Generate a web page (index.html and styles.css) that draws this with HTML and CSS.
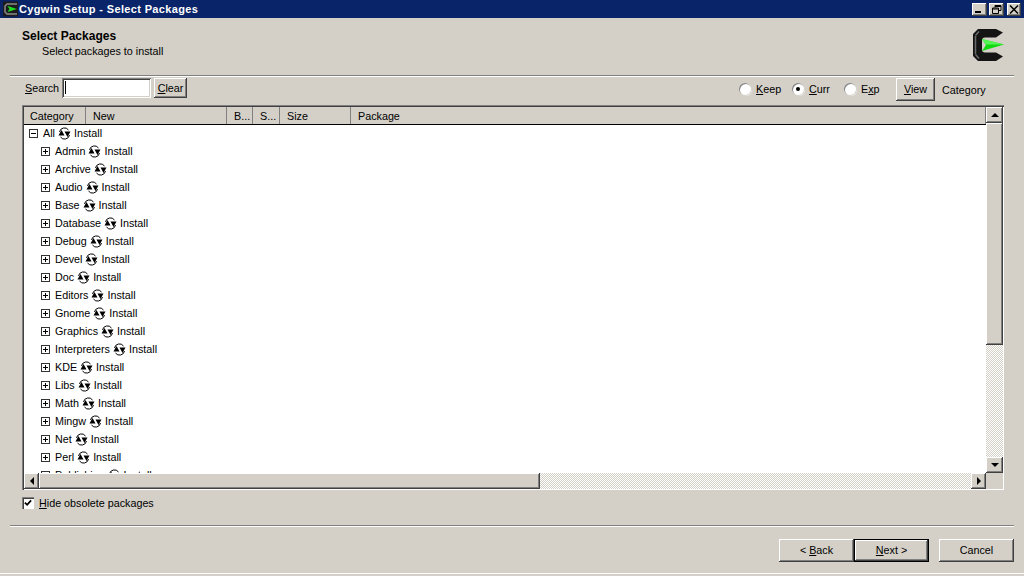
FILE: index.html
```html
<!DOCTYPE html>
<html lang="en">
<head>
<meta charset="utf-8">
<title>Cygwin Setup - Select Packages</title>
<link rel="stylesheet" href="styles.css">
</head>
<body>
<svg class="defs" width="0" height="0" aria-hidden="true">
  <symbol id="sync" viewBox="0 0 13 13">
    <path d="M1.500 5A5 5 0 0 1 10.500 3M11.500 8A5 5 0 0 1 2.500 10" fill="none" stroke="#000" stroke-width="1"/>
    <path d="M0.500 8.500h6L3.500 3zM6.500 4.500h6L9.500 10z" fill="#000"/>
  </symbol>
  <symbol id="logo" viewBox="0 0 31 32">
    <path d="M5 0H23L30 3.500 23 8.500H12Q9 8.500 9 11.500V20.500Q9 23.500 12 23.500H23L30 27.500 23 32H5L0 27V5Z" fill="#141414"/>
    <path d="M2.500 6.500 6 2.500M2.500 7V25M2.500 25.500 6 29.500" fill="none" stroke="#6a6a6a" stroke-width="1.500"/>
    <path d="M9 10 31 15.500 9 22 13 16Z" fill="#12d812"/>
    <path d="M9 10 31 15.500 13 15.500Z" fill="#55f555"/>
  </symbol>
</svg>
<div class="window">
  <header class="titlebar">
    <svg class="title-icon" viewBox="0 0 16 16"><rect x="1" y="0.500" width="15" height="15" fill="#1c1c1c"/><path d="M15 3H5L3 5v6l2 2h10" fill="none" stroke="#8a8a8a" stroke-width="1.500"/><path d="M5.500 5l9.500 3-9.500 3 2-3z" fill="#1fe01f"/></svg>
    <span class="title-text">Cygwin Setup - Select Packages</span>
    <div class="caption-buttons">
      <div class="caption-btn"><span class="min-glyph"></span></div>
      <div class="caption-btn"><svg class="glyph" viewBox="0 0 10 9"><path d="M3 .5h6v5H7M3 .500v2M3 1.500h6M.5 3h6v5.500H.5zM.5 4h6" fill="none" stroke="#000"/></svg></div>
      <div class="caption-btn close"><svg class="glyph" viewBox="0 0 10 9"><path d="M1 .5 9 8.500M9 .500 1 8.500" fill="none" stroke="#000" stroke-width="1.500"/></svg></div>
    </div>
  </header>

  <section class="page-header">
    <div class="heading">
      <div class="heading-title">Select Packages</div>
      <div class="heading-sub">Select packages to install</div>
    </div>
    <svg class="logo"><use href="#logo"/></svg>
  </section>
  <div class="rule"></div>

  <div class="toolbar">
    <label class="search-label"><u>S</u>earch</label>
    <div class="search-input"><span class="caret"></span></div>
    <button class="btn clear"><u>C</u>lear</button>
    <div class="spacer"></div>
    <span class="radio"></span><span class="radio-label keep"><u>K</u>eep</span>
    <span class="radio on"></span><span class="radio-label curr"><u>C</u>urr</span>
    <span class="radio"></span><span class="radio-label exp">E<u>x</u>p</span>
    <button class="btn view"><u>V</u>iew</button>
    <span class="view-mode">Category</span>
  </div>

  <div class="listbox">
    <div class="list-main">
      <div class="columns">
        <div class="col">Category</div>
        <div class="col">New</div>
        <div class="col">B...</div>
        <div class="col">S...</div>
        <div class="col">Size</div>
        <div class="col">Package</div>
      </div>
      <div class="tree">
        <div class="row root"><span class="exp-box minus"></span><span class="name">All</span><svg class="sync"><use href="#sync"/></svg><span>Install</span></div>
        <div class="row"><span class="exp-box"></span><span class="name">Admin</span><svg class="sync"><use href="#sync"/></svg><span>Install</span></div>
        <div class="row"><span class="exp-box"></span><span class="name">Archive</span><svg class="sync"><use href="#sync"/></svg><span>Install</span></div>
        <div class="row"><span class="exp-box"></span><span class="name">Audio</span><svg class="sync"><use href="#sync"/></svg><span>Install</span></div>
        <div class="row"><span class="exp-box"></span><span class="name">Base</span><svg class="sync"><use href="#sync"/></svg><span>Install</span></div>
        <div class="row"><span class="exp-box"></span><span class="name">Database</span><svg class="sync"><use href="#sync"/></svg><span>Install</span></div>
        <div class="row"><span class="exp-box"></span><span class="name">Debug</span><svg class="sync"><use href="#sync"/></svg><span>Install</span></div>
        <div class="row"><span class="exp-box"></span><span class="name">Devel</span><svg class="sync"><use href="#sync"/></svg><span>Install</span></div>
        <div class="row"><span class="exp-box"></span><span class="name">Doc</span><svg class="sync"><use href="#sync"/></svg><span>Install</span></div>
        <div class="row"><span class="exp-box"></span><span class="name">Editors</span><svg class="sync"><use href="#sync"/></svg><span>Install</span></div>
        <div class="row"><span class="exp-box"></span><span class="name">Gnome</span><svg class="sync"><use href="#sync"/></svg><span>Install</span></div>
        <div class="row"><span class="exp-box"></span><span class="name">Graphics</span><svg class="sync"><use href="#sync"/></svg><span>Install</span></div>
        <div class="row"><span class="exp-box"></span><span class="name">Interpreters</span><svg class="sync"><use href="#sync"/></svg><span>Install</span></div>
        <div class="row"><span class="exp-box"></span><span class="name">KDE</span><svg class="sync"><use href="#sync"/></svg><span>Install</span></div>
        <div class="row"><span class="exp-box"></span><span class="name">Libs</span><svg class="sync"><use href="#sync"/></svg><span>Install</span></div>
        <div class="row"><span class="exp-box"></span><span class="name">Math</span><svg class="sync"><use href="#sync"/></svg><span>Install</span></div>
        <div class="row"><span class="exp-box"></span><span class="name">Mingw</span><svg class="sync"><use href="#sync"/></svg><span>Install</span></div>
        <div class="row"><span class="exp-box"></span><span class="name">Net</span><svg class="sync"><use href="#sync"/></svg><span>Install</span></div>
        <div class="row"><span class="exp-box"></span><span class="name">Perl</span><svg class="sync"><use href="#sync"/></svg><span>Install</span></div>
        <div class="row"><span class="exp-box"></span><span class="name">Publishing</span><svg class="sync"><use href="#sync"/></svg><span>Install</span></div>
      </div>
      <div class="hscroll">
        <div class="sb-btn"><span class="arrow left"></span></div>
        <div class="sb-thumb hthumb"></div>
        <div class="sb-track"></div>
        <div class="sb-btn"><span class="arrow right"></span></div>
      </div>
    </div>
    <div class="vscroll">
      <div class="sb-btn"><span class="arrow up"></span></div>
      <div class="sb-thumb vthumb"></div>
      <div class="sb-track"></div>
      <div class="sb-btn"><span class="arrow down"></span></div>
    </div>
  </div>

  <div class="options">
    <span class="checkbox"><svg viewBox="0 0 9 9"><path d="M1 4l2.500 2.500L8 1.500" fill="none" stroke="#000" stroke-width="2"/></svg></span>
    <span><u>H</u>ide obsolete packages</span>
  </div>

  <div class="rule footer-rule"></div>

  <footer class="footer">
    <button class="btn wizard">&lt; <u>B</u>ack</button>
    <button class="btn wizard default"><u>N</u>ext &gt;</button>
    <button class="btn wizard cancel">Cancel</button>
  </footer>
  <div class="bottom-edge"></div>
</div>
</body>
</html>
```
FILE: styles.css
```css
* { box-sizing: border-box; }
html, body { margin: 0; height: 100%; }
body {
  width: 1024px;
  height: 576px;
  overflow: hidden;
  background: #d4d0c8;
  color: #000;
  font-family: "Liberation Sans", Arial, sans-serif;
  font-size: 10.75px;
  line-height: 14px;
}
.defs { position: absolute; }
.window { display: flex; flex-direction: column; height: 576px; }

.titlebar {
  display: flex;
  align-items: center;
  height: 18px;
  background: #0a246a;
  color: #fff;
  font-weight: bold;
  font-size: 11px;
  padding-left: 2px;
}
.title-icon { width: 16px; height: 16px; }
.title-text { margin-left: 1px; letter-spacing: 0.35px; }
.caption-buttons { display: flex; margin-left: auto; padding-right: 3px; }
.caption-btn {
  display: flex;
  align-items: center;
  justify-content: center;
  width: 15px;
  height: 13px;
  margin-left: 2px;
  background: #d4d0c8;
  box-shadow: inset -1px -1px #404040, inset 1px 1px #fff, inset -2px -2px #808080;
}
.caption-btn.close { width: 14px; margin-left: 3px; }
.glyph { width: 10px; height: 9px; }
.min-glyph { width: 6px; height: 2px; background: #000; margin: 6px 3px 0 0; }

.page-header {
  display: flex;
  justify-content: space-between;
  height: 57px;
  padding: 11px 20px 0 22px;
}
.heading-title { font-weight: bold; font-size: 12px; line-height: 14px; }
.heading-sub { margin: 1px 0 0 20px; }
.logo { width: 31px; height: 32px; }

.rule {
  flex: none;
  height: 2px;
  margin: 0 10px;
  background: linear-gradient(#808080 0 1px, #fff 1px);
}

.toolbar {
  display: flex;
  align-items: flex-start;
  height: 28px;
  padding: 1px 82px 0 25px;
}
.search-label { width: 37px; margin-top: 3px; }
.search-input {
  width: 89px;
  height: 20px;
  background: #fff;
  padding: 3px;
  box-shadow: inset 1px 1px #808080, inset -1px -1px #fff, inset 2px 2px #404040, inset -2px -2px #d4d0c8;
}
.caret { display: block; width: 1px; height: 13px; background: #000; }
.spacer { flex: 1; }
.btn {
  border: 0;
  padding: 0;
  background: #d4d0c8;
  color: #000;
  font: inherit;
  box-shadow: inset -1px -1px #404040, inset 1px 1px #fff, inset -2px -2px #808080;
}
.clear { width: 33px; height: 20px; margin-left: 3px; }
.radio {
  position: relative;
  width: 12px;
  height: 12px;
  margin-top: 5px;
  border-radius: 50%;
  background: #fff;
  box-shadow: inset 1px 1px 0 #808080, 0 0 0 1px #d4d0c8, 1px 1px 0 0 #fff;
}
.radio.on::after {
  content: "";
  position: absolute;
  left: 4px;
  top: 4px;
  width: 4px;
  height: 4px;
  border-radius: 50%;
  background: #000;
}
.radio-label { margin: 4px 0 0 5px; }
.keep { width: 36px; }
.curr { width: 35px; }
.exp { width: 35px; }
.view { width: 39px; height: 23px; padding-bottom: 2px; }
.view-mode { width: 0; margin: 5px 0 0 7px; white-space: nowrap; }

.listbox {
  display: flex;
  flex: none;
  height: 385px;
  margin: 0 20px 0 22px;
  padding: 2px 1px 1px 2px;
  box-shadow: inset 1px 1px #808080, inset 2px 2px #404040, inset -1px -1px #fff;
}
.list-main { display: flex; flex-direction: column; flex: 1; min-width: 0; }
.columns {
  display: grid;
  grid-template-columns: 62px 141px 26px 27px 71px 1fr;
  height: 18px;
  flex: none;
  border-bottom: 1px solid #000;
}
.col {
  padding: 2px 0 0 7px;
  background: #d4d0c8;
  white-space: nowrap;
  overflow: hidden;
  box-shadow: inset -1px 0 #808080;
}
.col:first-child { padding-left: 6px; }
.tree {
  flex: 1;
  min-height: 0;
  overflow: hidden;
  background: #fff;
}
.row {
  display: flex;
  align-items: center;
  height: 18px;
  padding: 0 0 2px 17px;
  white-space: nowrap;
}
.row.root { padding-left: 5px; }
.exp-box {
  position: relative;
  flex: none;
  width: 9px;
  height: 9px;
  margin-right: 5px;
  border: 1px solid #333;
}
.exp-box::before {
  content: "";
  position: absolute;
  left: 1px;
  top: 3px;
  width: 5px;
  height: 1px;
  background: #000;
}
.exp-box::after {
  content: "";
  position: absolute;
  left: 3px;
  top: 1px;
  width: 1px;
  height: 5px;
  background: #000;
}
.exp-box.minus::after { display: none; }
.sync { flex: none; width: 13px; height: 13px; margin: 0 3px; }

.hscroll { display: flex; flex: none; height: 16px; }
.vscroll { display: flex; flex-direction: column; flex: none; width: 17px; margin-bottom: 16px; }
.sb-btn, .sb-thumb {
  display: flex;
  align-items: center;
  justify-content: center;
  background: #d4d0c8;
  box-shadow: inset -1px -1px #404040, inset 1px 1px #fff, inset -2px -2px #808080;
}
.hscroll .sb-btn { flex: none; width: 15px; }
.vscroll .sb-btn { flex: none; height: 16px; }
.hthumb { flex: none; width: 501px; }
.vthumb { flex: none; height: 222px; }
.sb-track {
  flex: 1;
  background: repeating-conic-gradient(#fff 0 25%, #d4d0c8 0 50%) 0 0 / 2px 2px;
}
.arrow { width: 0; height: 0; border: 4px solid transparent; }
.arrow.up { border-top: 0; border-bottom-color: #000; }
.arrow.down { border-bottom: 0; border-top-color: #000; }
.arrow.left { border-left: 0; border-right-color: #000; }
.arrow.right { border-right: 0; border-left-color: #000; }

.options {
  display: flex;
  flex: none;
  align-items: center;
  height: 26px;
  padding: 0 0 0 22px;
}
.checkbox {
  display: flex;
  align-items: center;
  justify-content: center;
  width: 12px;
  height: 12px;
  margin-right: 5px;
  background: #fff;
  box-shadow: inset 1px 1px #808080, inset 2px 2px #404040, inset -1px -1px #fff;
}
.checkbox svg { width: 8px; height: 8px; }

.footer-rule { margin-top: 9px; }

.footer {
  display: flex;
  flex: none;
  height: 46px;
  padding: 12px 10px 0 779px;
}
.wizard { width: 75px; height: 23px; padding-bottom: 2px; }
.wizard.default {
  box-shadow: inset 0 0 0 1px #000, inset -2px -2px #404040, inset 2px 2px #fff, inset -3px -3px #808080;
}
.cancel { margin-left: 10px; }
.bottom-edge { flex: none; height: 1px; background: #fff; }
```
